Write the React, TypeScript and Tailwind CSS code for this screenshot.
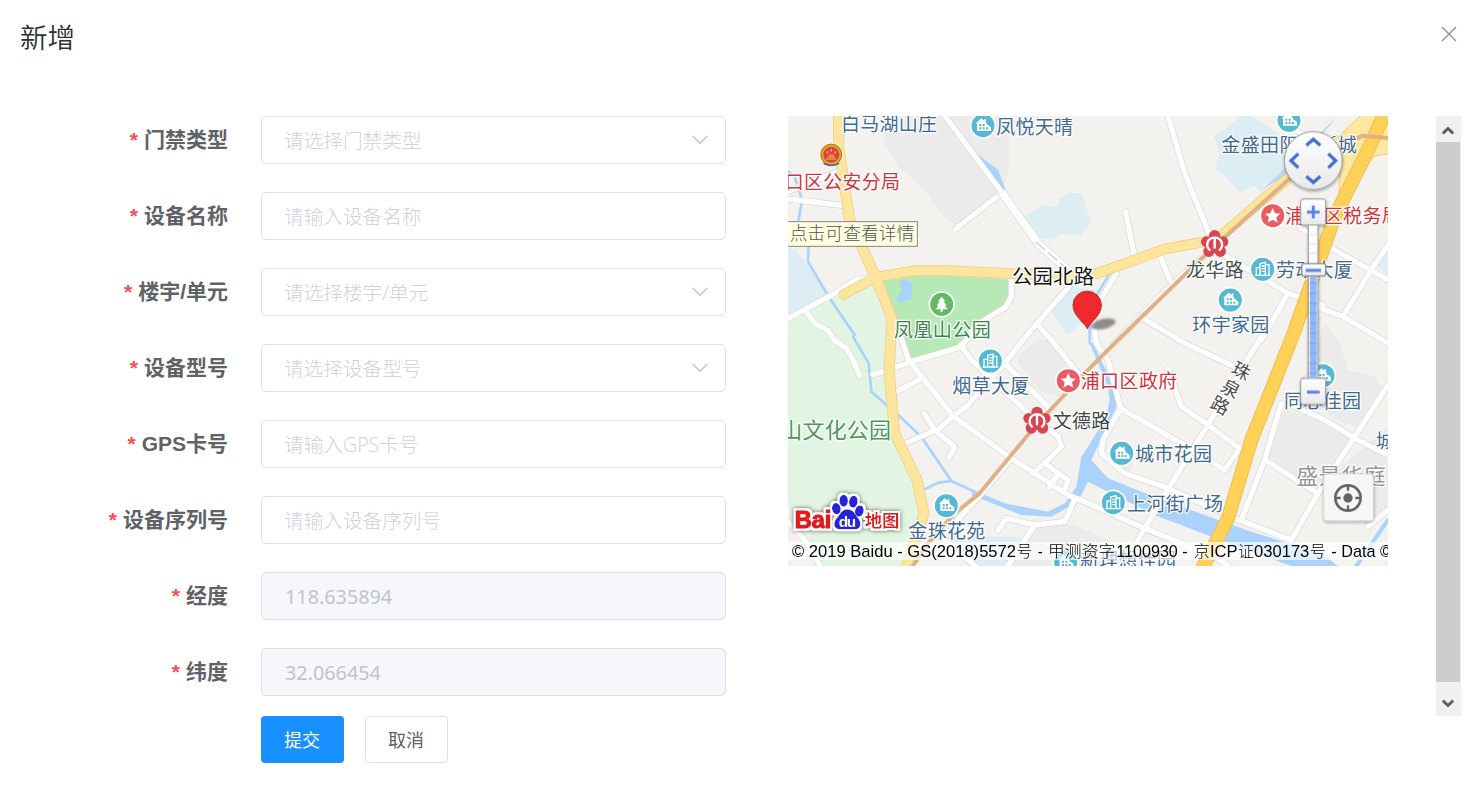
import React from "react";

type Field = { label: string; text: string; kind: "select" | "input" | "disabled" };

const fields: Field[] = [
  { label: "门禁类型", text: "请选择门禁类型", kind: "select" },
  { label: "设备名称", text: "请输入设备名称", kind: "input" },
  { label: "楼宇/单元", text: "请选择楼宇/单元", kind: "select" },
  { label: "设备型号", text: "请选择设备型号", kind: "select" },
  { label: "GPS卡号", text: "请输入GPS卡号", kind: "input" },
  { label: "设备序列号", text: "请输入设备序列号", kind: "input" },
  { label: "经度", text: "118.635894", kind: "disabled" },
  { label: "纬度", text: "32.066454", kind: "disabled" },
];

function FormRow({ label, text, kind }: Field) {
  return (
    <div className="flex h-12 items-center">
      <div className="w-[228px] text-right font-['Liberation_Sans','Noto_Sans_CJK_SC',sans-serif] text-[21px] leading-[30px] font-bold whitespace-nowrap text-[#606266]">
        <span className="mr-[6px] text-[#ff4d4f]">*</span>
        {label}
      </div>
      <div
        className={
          "ml-[33px] flex h-12 w-[465px] items-center justify-between rounded-[5px] border border-[#dcdfe6] pr-[17px] text-[19.65px] " +
          (kind === "disabled" ? "bg-[#f5f7fa] pl-[23px] text-[#c0c4cc]" : "bg-white pl-[22px] font-light text-[#cfd2da]")
        }
      >
        <span
          className={
            kind === "disabled"
              ? "pt-px font-['Noto_Sans'] text-[19.8px]"
              : "pt-px font-['Open_Sans','Noto_Sans_CJK_SC',sans-serif]"
          }
        >
          {text}
        </span>
        {kind === "select" && (
          <svg width="16" height="10" viewBox="0 0 16 10" fill="none" stroke="#c0c4cc" strokeWidth="1.5">
            <path d="M.5 .8 8 8.3 15.500 .8" />
          </svg>
        )}
      </div>
    </div>
  );
}

const streets = [
  "M465 10 640 245 750 400 830 475 860 505 835 540 790 590 705 690 650 760 540 885 495 918 455 955 345 1003",
  "M502 357 640 250",
  "M-5 268 25 270 168 287",
  "M-5 248 60 218 150 185",
  "M-5 628 150 545 200 512 245 503",
  "M55 605 80 640 120 662 140 692 175 715 198 755 215 798",
  "M670 510 670 560 652 592 570 642 535 690 515 712 370 755 300 780 255 793",
  "M338 680 362 750 495 918 670 1045 840 1155 900 1180 1070 1255 1290 1345 1330 1375",
  "M320 848 400 805",
  "M408 910 440 960 500 1010 483 1042",
  "M518 705 550 750 700 890 740 925 810 980 820 1010 770 1060 735 1090",
  "M650 760 790 900",
  "M745 640 790 690 870 790",
  "M770 1060 840 1110 830 1140",
  "M808 1095 785 1130",
  "M670 1045 590 1140 500 1240",
  "M630 1260 655 1225 740 1245 830 1235 860 1170",
  "M740 1245 655 1375",
  "M1138 10 1190 190 1265 375",
  "M1013 305 1038 435",
  "M1118 440 1145 510",
  "M985 490 940 565 915 620 925 700 960 750 998 895 1180 1000 1310 1080 1355 1015 1260 945 1180 890 1140 775",
  "M1245 440 1130 545 980 700",
  "M998 895 945 990 940 1030 1010 1090 1140 1135 1340 1225 1510 1290 1590 1150 1800 825",
  "M1420 680 1250 960 1120 1170 1000 1375",
  "M1300 430 1500 550 1605 585",
  "M1500 550 1420 690",
  "M1065 625 1190 700 1340 770",
  "M1535 350 1640 420 1810 515",
  "M1585 590 1665 620 1810 705",
  "M1665 620 1755 470 1815 385",
  "M1480 880 1430 1050 1360 1230",
  "M1430 1050 1590 1150",
  "M1520 890 1620 935 1700 985 1810 1040",
  "M1490 18 1530 65 1600 100",
  "M1740 1250 1800 1200",
  "M-5 1230 60 1300 100 1375",
  "M470 1290 570 1375",
];

const rivers = [
  "M-5 180 20 200 42 270 32 330",
  "M62 410 60 455 125 565 200 675",
  "M195 680 242 760 250 845 325 910 400 980 490 1113 570 1150",
  "M410 1138 450 1118 490 1113",
  "M965 490 905 590 905 700",
];

function Poi({ x, y, tall }: { x: number; y: number; tall?: boolean }) {
  return (
    <g transform={`translate(${x} ${y})`}>
      <circle r="37" fill="#56b9d4" stroke="#fff" strokeWidth="5" />
      {tall ? (
        <g fill="none" stroke="#fff" strokeWidth="4" strokeLinejoin="miter">
          <path d="M-8 17V-17L8 -21V17M-19 17V-5h7M12 -14h7V17M-22 18h44M-2 -10h6M-2 -2h6M-2 6h6" />
        </g>
      ) : (
        <g>
          <path d="M-22 -6 -5 -22 4 -15V-20H9V-10L12 -6V-2H16L24 6V16H-18V-6Z" fill="#fff" />
          <path d="M-11 -5h6v6h-6zM-1 -5h6v6h-6zM-11 5h6v6h-6zM-1 5h6v6h-6zM9 5h6v6h-6z" fill="#56b9d4" />
        </g>
      )}
    </g>
  );
}

function Star({ x, y }: { x: number; y: number }) {
  return (
    <g transform={`translate(${x} ${y})`}>
      <circle r="37" fill="#ea5b63" stroke="#fff" strokeWidth="5" />
      <path d="M0 -23 7 -7 23 -6 11 5 15 21 0 12 -15 21 -11 5 -23 -6 -7 -7Z" fill="#fff" />
    </g>
  );
}

function Metro({ x, y }: { x: number; y: number }) {
  return (
    <g transform={`translate(${x} ${y})`}>
      <g fill="#d9464f">
        <circle cy="-25" r="17" />
        <circle cx="-25" cy="-7" r="16" />
        <circle cx="25" cy="-7" r="16" />
        <circle cx="-17" cy="22" r="17" />
        <circle cx="17" cy="22" r="17" />
        <circle r="27" />
      </g>
      <g fill="none" stroke="#fff" strokeLinecap="butt">
        <path d="M-13 20C-30 6 -22 -19 0 -19C22 -19 30 6 13 20" strokeWidth="7" />
        <path d="M0 -20V14" strokeWidth="7" />
      </g>
    </g>
  );
}

const labels: { t: string; x: number; y: number; w: number; c: string; s?: number }[] = [
  { t: "白马湖山庄", x: 159, y: 62, w: 288, c: "#41698f" },
  { t: "凤悦天晴", x: 625, y: 73, w: 230, c: "#41698f" },
  { t: "口区公安分局", x: -10, y: 237, w: 346, c: "#d0353d" },
  { t: "凤凰山公园", x: 318, y: 681, w: 290, c: "#38874a" },
  { t: "金盛田阳光新城", x: 1300, y: 126, w: 406, c: "#41698f" },
  { t: "浦口区税务局", x: 1492, y: 340, w: 346, c: "#d0353d" },
  { t: "龙华路", x: 1194, y: 502, w: 173, c: "#465352" },
  { t: "劳动大厦", x: 1464, y: 502, w: 230, c: "#41698f" },
  { t: "环宇家园", x: 1213, y: 665, w: 231, c: "#41698f" },
  { t: "烟草大厦", x: 493, y: 849, w: 231, c: "#41698f" },
  { t: "浦口区政府", x: 878, y: 834, w: 290, c: "#d0353d" },
  { t: "文德路", x: 794, y: 954, w: 173, c: "#3e4547" },
  { t: "山文化公园", x: -23, y: 984, w: 332, c: "#4d9657", s: 66 },
  { t: "城市花园", x: 1041, y: 1053, w: 231, c: "#41698f" },
  { t: "上河街广场", x: 1017, y: 1202, w: 288, c: "#41698f" },
  { t: "金珠花苑", x: 361, y: 1284, w: 231, c: "#41698f" },
  { t: "同心佳园", x: 1488, y: 893, w: 231, c: "#41698f" },
  { t: "城", x: 1763, y: 1014, w: 58, c: "#41698f" },
  { t: "盛景华庭", x: 1525, y: 1121, w: 268, c: "#969696", s: 66 },
  { t: "新理想佳园", x: 876, y: 1370, w: 288, c: "#41698f" },
];

const notices: { t: string; x: number; w: number; cjk?: boolean }[] = [
  { t: "© 2019 Baidu - GS(2018)5572", x: 12, w: 672 },
  { t: "号", x: 686, w: 46, cjk: true },
  { t: "-", x: 749, w: 15 },
  { t: "甲测资字", x: 780, w: 202, cjk: true },
  { t: "1100930 -", x: 985, w: 214 },
  { t: "京", x: 1217, w: 48, cjk: true },
  { t: "ICP", x: 1266, w: 83 },
  { t: "证", x: 1350, w: 48, cjk: true },
  { t: "030173", x: 1398, w: 166 },
  { t: "号", x: 1565, w: 48, cjk: true },
  { t: "- Data ©", x: 1630, w: 182 },
];

function CityMap() {
  return (
    <svg
      className="block shrink-0 font-['Noto_Sans_CJK_SC',sans-serif]"
      width="600"
      height="450"
      viewBox="0 18 1800 1350"
      strokeLinecap="round"
      strokeLinejoin="round"
    >
      <defs>
        <linearGradient id="knob" x2="0" y2="1">
          <stop stopColor="#fff" />
          <stop offset="1" stopColor="#e9e9eb" />
        </linearGradient>
        <filter id="soft" x="-30%" y="-30%" width="160%" height="170%">
          <feDropShadow dx="1" dy="4" stdDeviation="5" floodOpacity=".35" />
        </filter>
        <filter id="halo" x="-20%" y="-30%" width="140%" height="160%">
          <feMorphology in="SourceAlpha" operator="dilate" radius="6" result="wide" />
          <feFlood floodColor="#fff" />
          <feComposite in2="wide" operator="in" result="edge" />
          <feGaussianBlur in="wide" stdDeviation="6" result="shade" />
          <feFlood floodColor="#444" floodOpacity=".9" />
          <feComposite in2="shade" operator="in" result="glow" />
          <feMerge>
            <feMergeNode in="glow" />
            <feMergeNode in="edge" />
            <feMergeNode in="SourceGraphic" />
          </feMerge>
        </filter>
        <filter id="smudge" x="-30%" y="-50%" width="160%" height="200%">
          <feGaussianBlur stdDeviation="3" />
        </filter>
      </defs>
      <rect y="18" width="1800" height="1350" fill="#f3f2ef" />
      <g fill="#ebebeb">
        <path d="M290 18 288 100 330 170 420 250 455 310 502 345 640 250 665 170 665 60 640 18Z" />
        <path d="M745 690 690 740 690 760 760 845 820 860 870 790 800 690Z" />
        <path d="M1490 900 1440 1040 1590 1150 1700 980 1600 930Z" />
        <path d="M1590 690 1540 820 1640 930 1700 950 1790 850 1760 800 1680 780 1650 690 1610 640Z" />
        <path d="M1640 1090 1800 950 1800 1190 1740 1245 1640 1210Z" />
        <path d="M750 1245 860 1245 960 1290 1000 1368 660 1368Z" />
        <path d="M965 1030 1040 1040 1030 1080 980 1080Z" />
      </g>
      <g fill="#dceef3">
        <path d="M708 318 765 286 805 290 815 268 845 248 880 250 910 335 880 375 820 372 790 386 738 388Z" />
        <path d="M850 530 930 540 930 600 838 675 788 600Z" />
        <path d="M0 410 25 420 130 565 0 622Z" />
        <path d="M1278 80 1360 18 1390 18 1470 70 1510 150 1420 250 1400 228 1357 246 1305 192 1280 180 1295 130Z" />
        <path d="M1768 470 1810 400 1810 505Z" />
        <path d="M470 1280 700 1280 660 1368 570 1368Z" />
      </g>
      <path d="M0 640 160 550 262 505 318 650 300 800 320 975 385 1110 390 1200 345 1368 0 1368Z" fill="#e2f5e3" />
      <path d="M280 515 380 495 480 497 668 508 665 555 650 590 570 640 530 695 515 708 370 745 345 690 318 630Z" fill="#b7e9b6" />
      <path d="M338 512 350 506 374 520 370 568 330 577 326 565 342 540 334 527Z" fill="#a9d3fb" />
      <path d="M-5 1180 60 1270 100 1368H-5Z" fill="#f3f2ef" />

      <g fill="none" stroke="#a9d3fd" strokeWidth="8">
        {rivers.map((d) => (
          <path key={d} d={d} />
        ))}
      </g>
      <path d="M565 130 630 180 665 270 640 245Z" fill="#a9d3fd" />
      <path d="M1650 18 1500 190 1424 240 1590 75Z" fill="#b4d7fb" />
      <path d="M700 340 740 388" stroke="#a9d3fd" strokeWidth="5" />
      <path d="M555 1140 650 1180 780 1205 830 1180 865 1130 880 1040 900 1010 955 920 965 870 960 830 905 700 915 700 978 830 985 890 910 1050 960 1105 1110 1165 1390 1265 1600 1330 1650 1368 1510 1368 1350 1310 1100 1215 900 1115 870 1175 790 1220 700 1215 550 1155Z" fill="#a9d3fd" />
      <path d="M1800 1230 1705 1368" stroke="#a9d3fd" strokeWidth="12" />

      <g fill="none" stroke="#d9d7d5" strokeWidth="20">
        {streets.map((d) => (
          <path key={d} d={d} />
        ))}
      </g>
      <g fill="none" stroke="#fff" strokeWidth="16">
        {streets.map((d) => (
          <path key={d} d={d} />
        ))}
      </g>
      <g fill="none" strokeLinecap="butt">
        <path d="M640 245 750 400 850 490" stroke="#d9d7d5" strokeWidth="27" />
        <path d="M640 245 750 400 850 490" stroke="#fff" strokeWidth="23" />
      </g>
      <path d="M745 397 835 475" stroke="#c6d1d5" strokeWidth="4" strokeDasharray="34 14" />

      <path d="M1640 90 1725 10H1805V130L1755 140 1730 180 1650 330 1655 190Z" fill="#fde7a1" stroke="#f3ce7e" strokeWidth="3" />
      <g fill="none">
        <path d="M152 0V110L185 330 262 500 312 625 303 780 320 970 387 1110 408 1210 352 1380" stroke="#f3ce84" strokeWidth="33" />
        <path d="M167 553 262 502 380 482 480 482 700 492 860 500 930 490 1040 450 1130 417 1240 397 1290 385 1500 205 1640 90" stroke="#f3ce84" strokeWidth="32" />
        <path d="M152 0V110L185 330 262 500 312 625 303 780 320 970 387 1110 408 1210 352 1380" stroke="#fde59d" strokeWidth="28" />
        <path d="M167 553 262 502 380 482 480 482 700 492 860 500 930 490 1040 450 1130 417 1240 397 1290 385 1500 205 1640 90" stroke="#fde59d" strokeWidth="27" />
        <path d="M1795 0 1735 130 1640 320 1515 675 1390 990 1320 1225 1235 1390" stroke="#edb84a" strokeWidth="42" />
        <path d="M1795 0 1735 130 1640 320 1515 675 1390 990 1320 1225 1235 1390" stroke="#ffd257" strokeWidth="37" />
        <path d="M1810 85 1725 77 1665 105 1500 210 1290 400 1225 460 990 690 900 780 740 950 575 1150 500 1210 420 1300 370 1375" stroke="#dfb184" strokeWidth="12" />
      </g>

      <Poi x={585} y={47} />
      <Poi x={1503} y={31} />
      <Poi x={1327} y={570} />
      <Poi x={1424} y={478} tall />
      <Poi x={607} y={753} tall />
      <Poi x={1001} y={1030} />
      <Poi x={976} y={1178} tall />
      <Poi x={475} y={1187} />
      <Poi x={1605} y={797} />
      <Poi x={833} y={1357} />
      <Star x={1454} y={317} />
      <Star x={841} y={812} />
      <Metro x={1280} y={402} />
      <Metro x={747} y={932} />

      <g transform="translate(130 134)">
        <circle r="35" fill="#e0aa2b" stroke="#fff" strokeWidth="3" />
        <circle r="31" fill="none" stroke="#b77617" strokeWidth="3" />
        <circle r="24" fill="#d9463e" />
        <path d="M-14 13H14M-10 7H10M-6 1H6" stroke="#f0c259" strokeWidth="3" />
        <path d="M0 -14v2M-12 -8v2M12 -8v2" stroke="#f0c259" strokeWidth="5" />
        <path d="M-22 27Q0 38 22 27" fill="none" stroke="#4a64ae" strokeWidth="4" />
      </g>
      <g transform="translate(461 583)">
        <circle r="37" fill="#5fbc64" stroke="#fff" strokeWidth="5" />
        <path d="M0 -23 11 -9H6L15 4H9L19 15H3V23H-3V15H-19L-9 4H-15L-6 -9H-11Z" fill="#fff" />
      </g>

      {labels.map((l) => (
        <text
          key={l.t + l.x}
          x={l.x}
          y={l.y}
          fontSize={l.s ?? 57}
          textLength={l.w}
          fill={l.c}
          stroke="#fff"
          strokeWidth="7"
          paintOrder="stroke"
        >
          {l.t}
        </text>
      ))}
      <g fontSize="55" fill="#4a4f52" stroke="#fff" strokeWidth="6" paintOrder="stroke" textAnchor="middle">
        <text transform="translate(1360 783) rotate(28)" y="20">珠</text>
        <text transform="translate(1328 836) rotate(28)" y="20">泉</text>
        <text transform="translate(1297 886) rotate(28)" y="20">路</text>
      </g>
      <text x="672" y="521" fontSize="61" textLength="246" fill="#111" stroke="#fff" strokeWidth="8" paintOrder="stroke">
        公园北路
      </text>

      <ellipse cx="946" cy="642" rx="37" ry="15" fill="#555" opacity=".65" transform="rotate(-13 946 642)" filter="url(#smudge)" />
      <path d="M898 655C883 632 855 615 855 585A42 41 0 0 1 940 585C940 615 912 632 898 655Z" fill="#ee2a2d" stroke="#c52529" strokeWidth="3" />

      <rect x="-6" y="335" width="394" height="74" fill="#ffffe1" stroke="#858585" strokeWidth="3" />
      <text x="5" y="391" fontSize="53" textLength="374" fill="#555" fontWeight="300">点击可查看详情</text>

      <g filter="url(#halo)">
        <text x="20" y="1253" fontSize="70" fontWeight="700" textLength="110" lengthAdjust="spacingAndGlyphs" fill="#e5181d" stroke="#e5181d" strokeWidth="4" fontFamily="Liberation Sans">Bai</text>
        <g fill="#2520de">
          <ellipse cx="145" cy="1196" rx="13" ry="17" transform="rotate(-12 145 1196)" />
          <ellipse cx="167" cy="1172" rx="13" ry="18" />
          <ellipse cx="196" cy="1175" rx="13" ry="18" transform="rotate(10 196 1175)" />
          <ellipse cx="214" cy="1203" rx="13" ry="17" transform="rotate(15 214 1203)" />
          <path d="M178 1198C196 1198 202 1214 210 1224C222 1238 219 1258 201 1258H157C136 1258 134 1239 146 1225C157 1214 160 1198 178 1198Z" />
        </g>
        <text x="152" y="1251" fontSize="46" fontWeight="700" textLength="52" fill="#fff" fontFamily="Liberation Sans">du</text>
        <text x="230" y="1250" fontSize="52" fontWeight="700" textLength="104" fill="#e5181d">地图</text>
      </g>

      <rect y="1296" width="1800" height="54" fill="#fff" opacity=".65" />
      {notices.map((n) => (
        <text
          key={n.x}
          x={n.x}
          y="1341"
          fontSize={n.cjk ? 47 : 49}
          textLength={n.w}
          lengthAdjust="spacingAndGlyphs"
          fill="#000"
          fontWeight={n.cjk ? 300 : 400}
          fontFamily={n.cjk ? "Noto Sans CJK SC" : "Liberation Sans"}
        >
          {n.t}
        </text>
      ))}

      <g filter="url(#soft)" stroke="#98989b" strokeWidth="3" fill="url(#knob)">
        <circle cx="1576" cy="152" r="87" />
        <rect x="1562" y="330" width="28" height="490" />
        <rect x="1538" y="267" width="75" height="78" rx="7" />
        <rect x="1538" y="805" width="75" height="78" rx="7" />
      </g>
      <path d="M1566 500V803H1586V500Z" fill="#91b6fa" />
      <path d="M1566 374h20M1566 402h20M1566 430h20" stroke="#d6d6d8" strokeWidth="2" />
      <path d="M1566 520h20M1566 550h20M1566 580h20M1566 610h20M1566 640h20M1566 670h20M1566 700h20M1566 730h20M1566 760h20M1566 790h20" stroke="#6c95e8" strokeWidth="2" />
      <rect x="1541" y="461" width="72" height="37" rx="6" fill="url(#knob)" stroke="#8d8d90" strokeWidth="4" />
      <g fill="none" stroke="#4070d2" strokeWidth="10" strokeLinecap="butt" strokeLinejoin="miter">
        <path d="M1555 106 1576 88 1597 106M1555 199 1576 217 1597 199M1531 131 1509 152 1531 173M1621 131 1643 152 1621 173" />
        <path d="M1557 306h38M1576 287v38M1553 481h46M1557 846h38" stroke="#5485e8" strokeWidth="9" />
      </g>

      <rect x="1607" y="1092" width="149" height="140" rx="10" fill="#f6f6f6" stroke="#d0d0d0" strokeWidth="2" filter="url(#soft)" />
      <g fill="none" stroke="#666" strokeWidth="8" strokeLinecap="butt">
        <circle cx="1680" cy="1164" r="38" />
        <circle cx="1680" cy="1164" r="14" fill="#666" stroke="none" />
        <path d="M1680 1126v16M1680 1186v16M1642 1164h16M1702 1164h16" strokeWidth="7" />
      </g>
    </svg>
  );
}

export default function App() {
  return (
    <div className="h-[785px] w-[1478px] overflow-hidden bg-white font-['Noto_Sans_CJK_SC',sans-serif]">
      <header className="flex h-[116px] items-start justify-between pt-4 pr-[21px] pl-5">
        <h1 className="text-[27.5px] leading-[40px] font-[350] text-[#303133]">新增</h1>
        <button aria-label="关闭" className="mt-[10px]">
          <svg width="16" height="16" viewBox="0 0 16 16" stroke="#8c9096" strokeWidth="1.4">
            <path d="M1 1 15 15M15 1 1 15" />
          </svg>
        </button>
      </header>
      <main className="flex items-start">
        <form className="flex w-[788px] flex-col">
          <div className="flex flex-col gap-7">
            {fields.map((f) => (
              <FormRow key={f.label} {...f} />
            ))}
          </div>
          <div className="mt-5 flex gap-[21px] pl-[261px] text-[18px]">
            <button type="button" className="h-[47px] w-[83px] rounded-[4px] bg-[#1890ff] pr-px text-white">
              提交
            </button>
            <button type="button" className="h-[47px] w-[83px] rounded-[4px] border border-[#dcdfe6] bg-white pr-px text-[#606266]">
              取消
            </button>
          </div>
        </form>
        <CityMap />
        <div className="ml-12 flex h-[600px] w-[25px] flex-col bg-[#f0f0f0]">
          <div className="flex h-[26px] items-center justify-center pt-[3px] pr-px">
            <svg width="12" height="10" viewBox="0 0 12 10" fill="none" stroke="#606060" strokeWidth="3">
              <path d="M.8 7.500 6 2.500 11.200 7.500" />
            </svg>
          </div>
          <div className="h-[540px] w-6 bg-[#cdcdcd]" />
          <div className="flex h-[34px] items-center justify-center pt-[8px] pr-px">
            <svg width="12" height="10" viewBox="0 0 12 10" fill="none" stroke="#606060" strokeWidth="3">
              <path d="M.8 2.500 6 7.500 11.200 2.500" />
            </svg>
          </div>
        </div>
      </main>
    </div>
  );
}
